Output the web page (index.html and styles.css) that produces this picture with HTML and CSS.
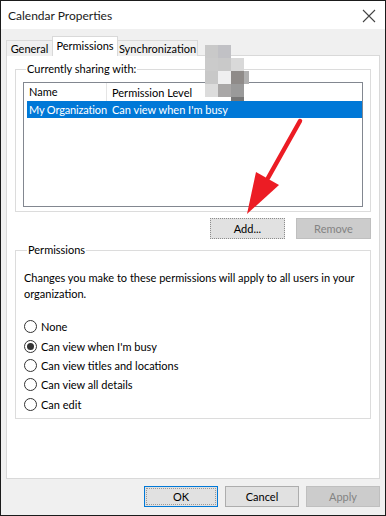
FILE: index.html
```html
<!DOCTYPE html>
<html lang="en">
  <head>
    <meta charset="UTF-8" />
    <title>Calendar Properties</title>
    <link rel="stylesheet" href="styles.css">
  </head>
  <body>
    <div class="window">
      <div class="titlebar">
        <span class="title">Calendar Properties</span>
        <svg class="close" width="14" height="14" viewBox="0 0 14 14">
          <path d="M1 1 L13 13 M13 1 L1 13" stroke="#444" stroke-width="1.1" fill="none" />
        </svg>
      </div>
      <div class="body">
        <div class="tabs">
          <div class="tab tab-general">General</div>
          <div class="tab tab-perms active">Permissions</div>
          <div class="tab tab-sync">Synchronization</div>
        </div>
        <div class="panel">
          <fieldset class="group sharing">
            <legend>Currently sharing with:</legend>
            <div class="list">
              <div class="list-head">
                <div class="col col-name">Name</div>
                <div class="col col-level">Permission Level</div>
              </div>
              <div class="list-row selected">
                <div class="col col-name">My Organization</div>
                <div class="col col-level">Can view when I'm busy</div>
              </div>
            </div>
          </fieldset>
          <div class="list-buttons">
            <button class="btn focus">Add...</button>
            <button class="btn disabled">Remove</button>
          </div>
          <fieldset class="group perms">
            <legend>Permissions</legend>
            <p class="note">Changes you make to these permissions will apply to all users in your organization.</p>
            <div class="radios">
              <label class="radio"><span class="dot"></span>None</label>
              <label class="radio checked"><span class="dot"></span>Can view when I'm busy</label>
              <label class="radio"><span class="dot"></span>Can view titles and locations</label>
              <label class="radio"><span class="dot"></span>Can view all details</label>
              <label class="radio"><span class="dot"></span>Can edit</label>
            </div>
          </fieldset>
        </div>
        <div class="footer">
          <button class="btn default">OK</button>
          <button class="btn">Cancel</button>
          <button class="btn disabled">Apply</button>
        </div>
      </div>

      <!-- blurred patch over the tab strip -->
      <div class="blur">
        <i style="left:0;top:0;background:#c9c9c9"></i>
        <i style="left:13px;top:0;background:#c1c1c5"></i>
        <i style="left:0;top:13px;background:#cbcbcb"></i>
        <i style="left:13px;top:13px;background:#c9c9c9"></i>
        <i style="left:26px;top:13px;background:#d9d9d9"></i>
        <i style="left:0;top:26px;background:#c8c8c8"></i>
        <i style="left:13px;top:26px;background:#efeff0"></i>
        <i style="left:26px;top:26px;background:#8f8b89"></i>
        <i style="left:39px;top:26px;width:5px;background:#b0b0b0"></i>
        <i style="left:0;top:39px;background:#dcdcdc"></i>
        <i style="left:13px;top:39px;background:#a9a7a7"></i>
        <i style="left:26px;top:39px;background:#9a9a9a"></i>
        <i style="left:26px;top:52px;height:4px;background:#777"></i>
      </div>

      <svg class="arrow" width="386" height="516" viewBox="0 0 386 516">
        <path d="M300 121 L268 178" stroke="#ec1c24" stroke-width="4.5" stroke-linecap="round" fill="none" />
        <path d="M247 214 L256 172 L279 185 Z" fill="#ec1c24" />
      </svg>
    </div>
  </body>
</html>
```

FILE: styles.css
```css
body {
  margin: 0;
  padding: 0;
  background: #ffffff;
}
.window {
  position: relative;
  width: 386px;
  height: 516px;
  box-sizing: border-box;
  border: 1px solid #1b1b1b;
  display: flex;
  flex-direction: column;
  font-family: Lato, "Noto Sans", sans-serif;
  font-size: 11px;
  color: #000;
  overflow: hidden;
}
.titlebar {
  height: 28px;
  background: #ffffff;
  display: flex;
  align-items: center;
  justify-content: space-between;
  padding: 0 9px 0 7px;
}
.title {
  font-size: 12px;
  color: #1a1a1a;
}
.close {
  margin-top: 1px;
}
.body {
  flex: 1;
  background: #f0f0f0;
  padding: 7px 5px 0 5px;
  display: flex;
  flex-direction: column;
}
.tabs {
  display: flex;
  align-items: flex-end;
  height: 20px;
  position: relative;
  z-index: 1;
  margin-bottom: -1px;
}
.tab {
  height: 15px;
  line-height: 15px;
  box-sizing: content-box;
  text-align: center;
  border: 1px solid #d9d9d9;
  border-bottom: none;
  background: #f0f0f0;
  color: #000;
  white-space: nowrap;
}
.tab + .tab {
  margin-left: -1px;
}
.tab.active {
  height: 19px;
  line-height: 17px;
  background: #ffffff;
}
.tab-general {
  width: 45px;
}
.tab-perms {
  width: 64px;
}
.tab-sync {
  width: 79px;
}
.panel {
  height: 424px;
  box-sizing: border-box;
  background: #ffffff;
  border: 1px solid #d9d9d9;
  padding: 0 8px;
  display: flex;
  flex-direction: column;
}
.group {
  margin: 0;
  border: 1px solid #dcdcdc;
  padding: 0 7px;
  min-width: 0;
}
.group legend {
  padding: 0 1px;
  margin-left: 3px;
  line-height: 16px;
  color: #000;
}
.sharing {
  margin-top: 5px;
  padding-top: 5px;
  padding-bottom: 4px;
}
.list {
  height: 125px;
  box-sizing: border-box;
  border: 1px solid #828790;
  background: #ffffff;
}
.list-head {
  display: flex;
  height: 18px;
  align-items: center;
}
.list-head .col-name {
  border-right: 1px solid #e5e5e5;
  height: 18px;
  line-height: 18px;
}
.list-row {
  display: flex;
  height: 17px;
  line-height: 17px;
  margin: 0 0 0 3px;
}
.list-row.selected {
  background: #0078d7;
  color: #ffffff;
}
.col {
  white-space: nowrap;
}
.col-name {
  width: 83px;
  padding-left: 5px;
  box-sizing: border-box;
}
.list-row .col-name {
  width: 82px;
  padding-left: 2px;
  letter-spacing: -0.15px;
}
.col-level {
  padding-left: 5px;
}
.list-row .col-level {
  padding-left: 3px;
}
.list-buttons {
  display: flex;
  justify-content: flex-end;
  gap: 11px;
  margin-top: 6px;
}
.btn {
  width: 75px;
  height: 21px;
  box-sizing: border-box;
  border: 1px solid #adadad;
  background: #e1e1e1;
  font-family: Lato, "Noto Sans", sans-serif;
  font-size: 11px;
  color: #000;
  padding: 0;
}
.btn.focus {
  border: 1px dotted #8c8c8c;
}
.btn.disabled {
  background: #cccccc;
  border-color: #bfbfbf;
  color: #838383;
}
.btn.default {
  border: 1px solid #0078d7;
  outline: 1px dotted #9a9a9a;
  outline-offset: -3px;
}
.perms {
  margin-top: 3px;
  padding: 12px 8px 4px 8px;
}
.note {
  margin: 0;
  line-height: 16px;
  color: #000;
}
.radios {
  margin-top: 15px;
  display: flex;
  flex-direction: column;
}
.radio {
  display: flex;
  align-items: center;
  height: 19.4px;
  gap: 4px;
}
.dot {
  width: 13px;
  height: 13px;
  box-sizing: border-box;
  border: 1px solid #333;
  border-radius: 50%;
  background: #fff;
  display: flex;
  align-items: center;
  justify-content: center;
}
.radio.checked .dot::after {
  content: "";
  width: 7px;
  height: 7px;
  border-radius: 50%;
  background: #333;
}
.footer {
  display: flex;
  justify-content: flex-end;
  gap: 7px;
  padding: 7px 0 0 0;
}
.footer .btn {
  width: 74px;
}
.blur {
  position: absolute;
  left: 204px;
  top: 44px;
  width: 44px;
  height: 56px;
}
.blur i {
  position: absolute;
  width: 13px;
  height: 13px;
}
.arrow {
  position: absolute;
  left: -1px;
  top: -1px;
  pointer-events: none;
}
```
